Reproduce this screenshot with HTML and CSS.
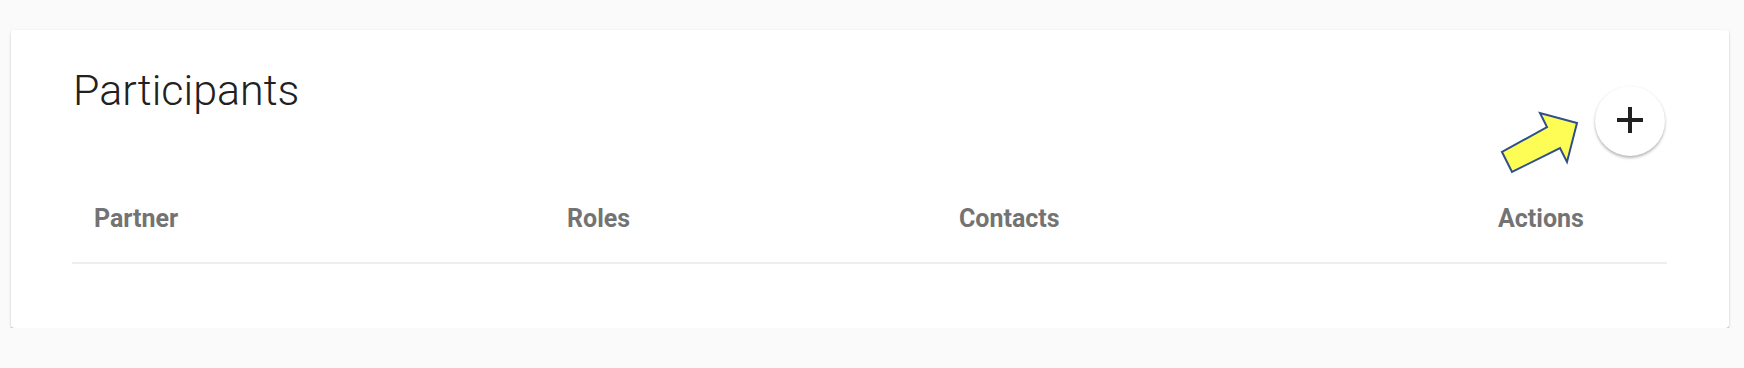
FILE: index.html
```html
<!DOCTYPE html>
<html lang="en">
<head>
<meta charset="utf-8">
<title>Participants</title>
<link rel="stylesheet" href="styles.css">
</head>
<body>
<section class="card">
  <header class="card-header">
    <h1 class="title">Participants</h1>
    <button class="fab" type="button" aria-label="Add participant">
      <svg class="plus" viewBox="0 0 26 26" width="26" height="26" aria-hidden="true">
        <path d="M13 0V26M0 13H26" stroke="#212121" stroke-width="4" fill="none"/>
      </svg>
    </button>
  </header>
  <div class="table">
    <div class="thead">
      <div class="th">Partner</div>
      <div class="th">Roles</div>
      <div class="th">Contacts</div>
      <div class="th">Actions</div>
    </div>
  </div>
  <svg class="arrow" viewBox="0 0 100 80" width="100" height="80" aria-hidden="true">
    <polygon points="11,47 21,67 69,43 76,57 86,18 49,8 56,22" fill="#fdfd55" stroke="#2f4f8c" stroke-width="2" stroke-linejoin="miter"/>
  </svg>
</section>
</body>
</html>
```

FILE: styles.css
```css
html, body {
  margin: 0;
  padding: 0;
  background: #fafafa;
}

body {
  font-family: Roboto, "Noto Sans", "Liberation Sans", sans-serif;
  padding: 30px 15px 0 11px;
}

.card {
  position: relative;
  background: #ffffff;
  border-radius: 3px;
  box-shadow: 0 2px 2px -1px rgba(0, 0, 0, 0.55), 0 1px 3px rgba(0, 0, 0, 0.12), 0 1px 1px rgba(0, 0, 0, 0.08);
  padding: 0 62px 0 61px;
  height: 298px;
  box-sizing: border-box;
}

.card-header {
  display: flex;
  justify-content: space-between;
  align-items: flex-start;
}

.title {
  margin: 36px 0 0 1px;
  font-size: 43px;
  line-height: 49px;
  font-weight: 300;
  color: #212121;
  letter-spacing: 0;
}

.fab {
  margin: 56px 2px 0 0;
  width: 70px;
  height: 70px;
  border-radius: 50%;
  border: none;
  background: #ffffff;
  padding: 0;
  display: flex;
  align-items: center;
  justify-content: center;
  box-shadow: 0 2px 3px rgba(0, 0, 0, 0.28), 0 0 2px rgba(0, 0, 0, 0.05);
}

.plus {
  display: block;
  margin-top: -2px;
}

.table {
  width: 100%;
}

.thead {
  display: grid;
  grid-template-columns: 473px 392px 539px 1fr;
  border-bottom: 2px solid #eeeeee;
}

.th {
  padding: 49px 0 29px 22px;
  font-size: 25px;
  line-height: 28px;
  font-weight: 700;
  color: #737373;
}

.arrow {
  position: absolute;
  left: 1480px;
  top: 75px;
}
```
